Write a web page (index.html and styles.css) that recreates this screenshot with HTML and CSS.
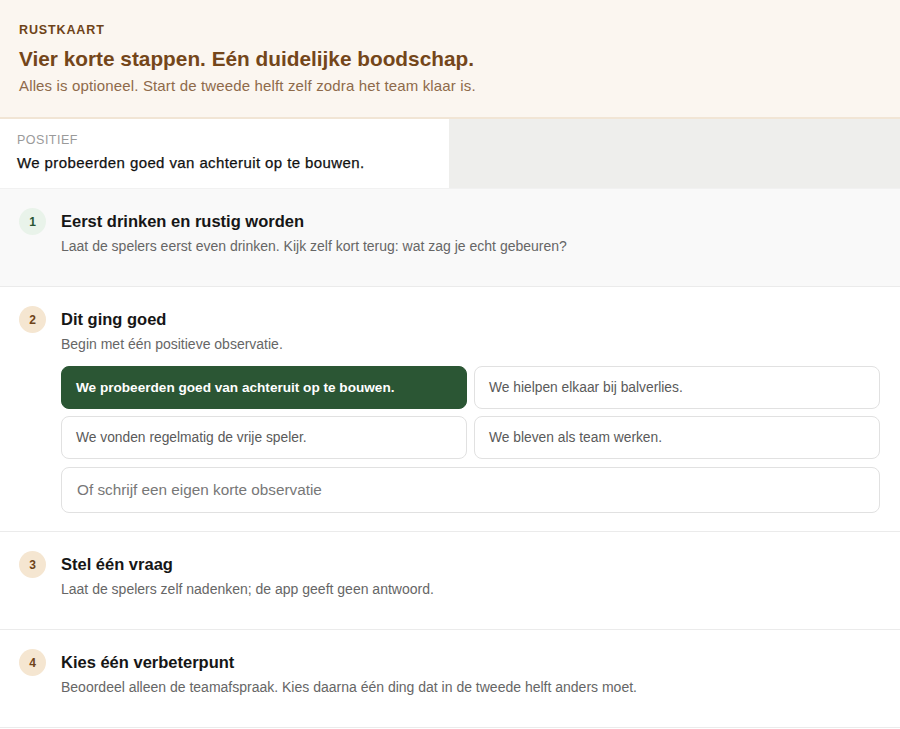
FILE: index.html
```html
<!DOCTYPE html>
<html lang="nl">
<head>
<meta charset="utf-8">
<title>Rustkaart</title>
<link rel="stylesheet" href="styles.css">
</head>
<body>
<header class="hero">
  <div class="eyebrow">RUSTKAART</div>
  <h1 class="hero-title">Vier korte stappen. Eén duidelijke boodschap.</h1>
  <p class="hero-sub">Alles is optioneel. Start de tweede helft zelf zodra het team klaar is.</p>
</header>

<section class="summary">
  <div class="summary-card">
    <div class="summary-label">POSITIEF</div>
    <div class="summary-text">We probeerden goed van achteruit op te bouwen.</div>
  </div>
  <div class="summary-empty"></div>
</section>

<section class="step step-muted">
  <div class="num num-green">1</div>
  <div class="step-body">
    <h2 class="step-title">Eerst drinken en rustig worden</h2>
    <p class="step-desc">Laat de spelers eerst even drinken. Kijk zelf kort terug: wat zag je echt gebeuren?</p>
  </div>
</section>

<section class="step step-tall">
  <div class="num">2</div>
  <div class="step-body">
    <h2 class="step-title">Dit ging goed</h2>
    <p class="step-desc">Begin met één positieve observatie.</p>
    <div class="options">
      <button class="opt opt-selected">We probeerden goed van achteruit op te bouwen.</button>
      <button class="opt">We hielpen elkaar bij balverlies.</button>
      <button class="opt">We vonden regelmatig de vrije speler.</button>
      <button class="opt">We bleven als team werken.</button>
      <input class="own" type="text" placeholder="Of schrijf een eigen korte observatie">
    </div>
  </div>
</section>

<section class="step">
  <div class="num">3</div>
  <div class="step-body">
    <h2 class="step-title">Stel één vraag</h2>
    <p class="step-desc">Laat de spelers zelf nadenken; de app geeft geen antwoord.</p>
  </div>
</section>

<section class="step">
  <div class="num">4</div>
  <div class="step-body">
    <h2 class="step-title">Kies één verbeterpunt</h2>
    <p class="step-desc">Beoordeel alleen de teamafspraak. Kies daarna één ding dat in de tweede helft anders moet.</p>
  </div>
</section>
</body>
</html>
```
FILE: styles.css
```css
* { box-sizing: border-box; }
html, body { margin: 0; padding: 0; }
body {
  font-family: "Liberation Sans", Arial, Helvetica, sans-serif;
  background: #ffffff;
  color: #1b1b1b;
  width: 900px;
}

.hero {
  background: #fbf6f0;
  padding: 22px 19px 21px;
  border-bottom: 2px solid #f1e5d5;
}
.eyebrow {
  font-size: 12.5px;
  line-height: 16px;
  font-weight: 700;
  letter-spacing: 0.07em;
  color: #6e4318;
}
.hero-title {
  margin: 8px 0 0;
  font-size: 20.8px;
  line-height: 26px;
  font-weight: 700;
  color: #74461a;
}
.hero-sub {
  margin: 4px 0 0;
  font-size: 15px;
  line-height: 20px;
  letter-spacing: 0.15px;
  color: #8e6a4a;
}

.summary {
  display: flex;
  height: 70px;
  background: #eeeeec;
  border-bottom: 1px solid #f1f1f1;
}
.summary-card {
  width: 449px;
  background: #ffffff;
  padding: 13px 17px 0;
}
.summary-label {
  font-size: 12.5px;
  line-height: 16px;
  color: #9a9a9a;
  letter-spacing: 0.04em;
}
.summary-text {
  margin-top: 5px;
  font-size: 15px;
  line-height: 20px;
  letter-spacing: 0.4px;
  color: #111111;
  -webkit-text-stroke: 0.25px #111111;
}
.summary-empty { flex: 1; }

.step {
  display: flex;
  gap: 15px;
  padding: 21px 20px 30px;
  border-bottom: 1px solid #ebebeb;
  background: #ffffff;
}
.step-muted { background: #f9f9f9; }
.step-tall { padding-bottom: 18px; }

.num {
  flex: none;
  width: 27px;
  height: 27px;
  margin-top: -2px;
  margin-left: -1px;
  border-radius: 50%;
  background: #f5e6d1;
  color: #6e4318;
  font-size: 12px;
  font-weight: 700;
  display: flex;
  align-items: center;
  justify-content: center;
}
.num-green {
  background: #e9f3ea;
  color: #2b5634;
}

.step-body { flex: 1; }
.step-title {
  margin: 0;
  font-size: 16.5px;
  line-height: 22px;
  font-weight: 700;
  color: #161616;
}
.step-desc {
  margin: 4px 0 0;
  font-size: 14px;
  line-height: 20px;
  color: #666666;
}

.options {
  margin-top: 12px;
  display: grid;
  grid-template-columns: 1fr 1fr;
  gap: 7px;
}
.opt {
  height: 43px;
  margin: 0;
  text-align: left;
  padding: 0 14px;
  font-family: inherit;
  font-size: 13.8px;
  color: #5a5a5a;
  background: #ffffff;
  border: 1px solid #e1e1e1;
  border-radius: 8px;
}
.opt-selected {
  background: #2b5634;
  border-color: #2b5634;
  color: #ffffff;
  font-weight: 700;
  font-size: 13.6px;
}
.own {
  grid-column: 1 / -1;
  margin-top: 1px;
  height: 46px;
  padding: 0 15px;
  font-family: inherit;
  font-size: 15.3px;
  color: #333;
  background: #ffffff;
  border: 1px solid #e1e1e1;
  border-radius: 8px;
  outline: none;
}
.own::placeholder { color: #777777; }
```
